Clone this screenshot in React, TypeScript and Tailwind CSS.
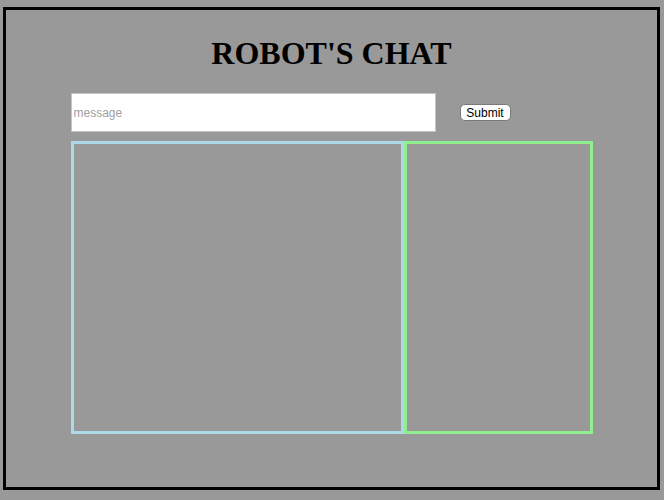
import { FunctionComponent } from "react";

const App: FunctionComponent = () => {
  return (
    <div className="min-h-[500px] w-full bg-[#999999] pt-[7px] pl-[3px]">
      <div className="flex h-[483px] w-[657px] flex-col items-center border-[3px] border-black">
        <h1 className="mt-[25px] font-['Liberation_Serif',serif] text-[32px] font-bold leading-[36px] text-black">
          ROBOT'S CHAT
        </h1>
        <div className="mt-[22px] flex w-[522px] items-center">
          <input
            type="text"
            placeholder="message"
            className="h-[39px] w-[365px] border border-[#c4c4c4] bg-white pl-[2px] font-['Liberation_Sans',Arial,sans-serif] text-[12px] text-black outline-none placeholder:text-[#a0a0a0]"
          />
          <button className="ml-[24px] flex h-[17px] w-[51px] items-center justify-center rounded-[5px] border border-[#7a7a7a] bg-white font-['Liberation_Sans',Arial,sans-serif] text-[12px] leading-none text-black">
            Submit
          </button>
        </div>
        <div className="mt-[9px] flex w-[522px]">
          <div className="h-[293px] w-[333px] border-[3px] border-[#add8e6]" />
          <div className="h-[293px] w-[189px] border-[3px] border-[#90ee90]" />
        </div>
      </div>
    </div>
  );
};

export default App;
